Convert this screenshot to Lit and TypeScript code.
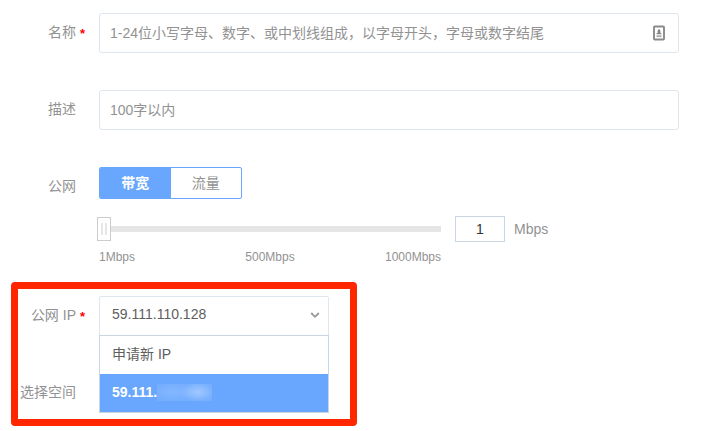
import { LitElement, html, css } from "lit";
import { customElement, property, state } from "lit/decorators.js";
import { classMap } from "lit/directives/class-map.js";

@customElement("form-row")
class FormRow extends LitElement {
  @property() label = "";
  @property({ type: Boolean }) required = false;

  static styles = css`
    :host { display: flex; align-items: flex-start; }
    .label {
      box-sizing: border-box;
      width: 76px;
      flex: none;
      height: 38px;
      line-height: 38px;
      text-align: right;
      color: #929292;
      white-space: nowrap;
    }
    .mark {
      width: 23px;
      flex: none;
      box-sizing: border-box;
      padding-left: 4px;
      height: 38px;
      line-height: 42px;
      color: #f00;
      font-size: 13px;
      font-weight: bold;
    }
    .content { flex: none; }
  `;

  render() {
    return html`
      <div class="label">${this.label}</div>
      <div class="mark">${this.required ? "*" : ""}</div>
      <div class="content"><slot></slot></div>
    `;
  }
}

@customElement("app-root")
class AppRoot extends LitElement {
  @state() private mode = "带宽";
  @state() private bandwidth = 1;

  static styles = css`
    :host {
      display: block;
      position: relative;
      box-sizing: border-box;
      width: 707px;
      height: 431px;
      padding-top: 13px;
      overflow: hidden;
      background: #fff;
      color: #929292;
      font-family: "Liberation Sans", "Noto Sans CJK SC", sans-serif;
      font-size: 14px;
    }
    .row { height: 77px; }
    .row.network { height: 129px; }
    .field {
      box-sizing: border-box;
      display: flex;
      align-items: center;
      justify-content: space-between;
      width: 580px;
      height: 40px;
      padding: 0 13px 0 10px;
      border: 1px solid #dfe6ed;
      border-radius: 3px;
      line-height: 38px;
      white-space: nowrap;
    }
    .hint { height: 38px; }
    .field svg { display: block; }
    .toggle {
      box-sizing: border-box;
      display: flex;
      width: 143px;
      height: 32px;
      border: 1px solid #68a7fd;
      border-radius: 2px;
      overflow: hidden;
      line-height: 31px;
      text-align: center;
    }
    .option { flex: 1; cursor: pointer; }
    .option.on { background: #68a7fd; color: #fff; font-weight: bold; }
    .slider { display: flex; align-items: center; height: 26px; margin-top: 17px; }
    .track { position: relative; width: 342px; height: 6px; background: #e6e6e6; }
    .handle {
      position: absolute;
      top: -9px;
      margin-left: -2px;
      box-sizing: border-box;
      display: flex;
      align-items: center;
      justify-content: center;
      gap: 2px;
      width: 14px;
      height: 24px;
      border: 1px solid #ccc;
      background: #fff;
    }
    .grip { width: 2px; height: 12px; background: #e6e6e6; }
    .amount {
      box-sizing: border-box;
      width: 50px;
      height: 26px;
      margin: 0 9px 0 14px;
      border: 1px solid #c9d5e0;
      color: #333;
      line-height: 25px;
      text-align: center;
    }
    .scale {
      display: grid;
      grid-template-columns: 1fr auto 1fr;
      width: 342px;
      margin-top: 8px;
      font-size: 12px;
      line-height: 14px;
    }
    .scale :last-child { text-align: right; }
    .select { position: relative; width: 230px; color: #5e5e5e; }
    .value {
      box-sizing: border-box;
      display: flex;
      align-items: center;
      justify-content: space-between;
      height: 40px;
      padding: 0 8px 2px 12px;
      border: 1px solid #dfe6ed;
      border-radius: 2px 2px 0 0;
    }
    .value span { padding-bottom: 2px; }
    .menu {
      position: absolute;
      top: 39px;
      left: 0;
      z-index: 1;
      box-sizing: border-box;
      width: 230px;
      border: 1px solid #c9d5e0;
      background: #fff;
    }
    .item {
      box-sizing: border-box;
      display: flex;
      align-items: center;
      height: 38px;
      padding: 0 0 5px 12px;
    }
    .item.on { padding-bottom: 2px; background: #68a7fd; color: #fff; font-weight: bold; }
    .masked {
      width: 55px;
      height: 17px;
      background:
        radial-gradient(ellipse 17px 10px at 41px 8px, #a2c8ff, transparent),
        radial-gradient(ellipse 22px 9px at 16px 8px, #84b7ff, transparent),
        #74aefe;
    }
    .highlight {
      position: absolute;
      left: 11px;
      top: 282px;
      box-sizing: border-box;
      width: 346px;
      height: 144px;
      border: 7px solid #ff2600;
      border-radius: 4px;
      pointer-events: none;
    }
  `;

  render() {
    return html`
      <form-row class="row" label="名称" required>
        <div class="field">
          <span class="hint">1-24位小写字母、数字、或中划线组成，以字母开头，字母或数字结尾</span>
          <svg width="12" height="16" viewBox="0 0 12 16">
            <rect x="1" y="1.5" width="10" height="13" rx="0.8" fill="none" stroke="#8a8a8a" stroke-width="1.9" />
            <path d="M6 3.8 L7.4 5.8 V8 H8.4 V9.2 H3.6 V8 H4.6 V5.8 Z" fill="#858585" />
            <path d="M3.5 11.2H8.5" stroke="#aaa" stroke-width="1.8" />
          </svg>
        </div>
      </form-row>
      <form-row class="row" label="描述">
        <div class="field"><span class="hint">100字以内</span></div>
      </form-row>
      <form-row class="row network" label="公网">
        <div class="toggle">
          ${["带宽", "流量"].map(
            (name) => html`<div
              class=${classMap({ option: true, on: this.mode === name })}
              @click=${() => (this.mode = name)}
            >${name}</div>`
          )}
        </div>
        <div class="slider">
          <div class="track">
            <div class="handle" style="left:${((this.bandwidth - 1) / 999) * 100}%">
              <span class="grip"></span><span class="grip"></span>
            </div>
          </div>
          <div class="amount">${this.bandwidth}</div>
          <span>Mbps</span>
        </div>
        <div class="scale"><span>1Mbps</span><span>500Mbps</span><span>1000Mbps</span></div>
      </form-row>
      <form-row class="row" label="公网 IP" required>
        <div class="select">
          <div class="value">
            <span>59.111.110.128</span>
            <svg width="10" height="7" viewBox="0 0 10 7">
              <path d="M1.2 1 L5 4.8 L8.8 1" fill="none" stroke="#999" stroke-width="1.8" />
            </svg>
          </div>
          <div class="menu">
            <div class="item">申请新 IP</div>
            <div class="item on">59.111.<span class="masked"></span></div>
          </div>
        </div>
      </form-row>
      <form-row class="row" label="选择空间"></form-row>
      <div class="highlight"></div>
    `;
  }
}
